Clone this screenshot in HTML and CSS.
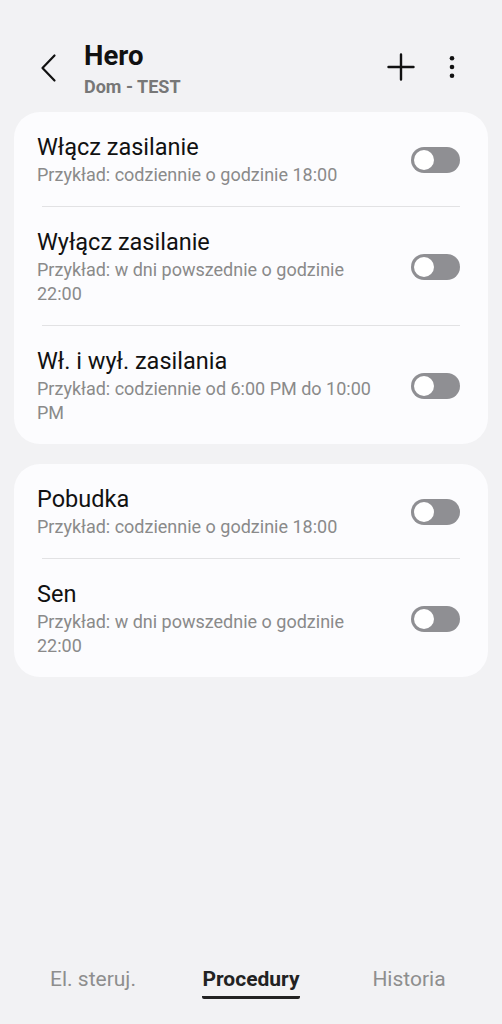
FILE: index.html
```html
<!DOCTYPE html>
<html lang="pl">
<head>
    <meta charset="UTF-8">
    <title>Hero - Procedury</title>
    <meta name="viewport" content="width=device-width, initial-scale=1.0">
    <link rel="stylesheet" href="styles.css">
</head>
<body>
    <div class="app">
        <header class="topbar">
            <button class="icon-btn back" aria-label="Wstecz">
                <svg width="24" height="30" viewBox="0 0 24 30"><path d="M17.5 2.5 L5.5 15 L17.5 27.5" fill="none" stroke="#111" stroke-width="2.2" stroke-linecap="round" stroke-linejoin="round"/></svg>
            </button>
            <div class="titles">
                <h1>Hero</h1>
                <p class="subtitle">Dom - TEST</p>
            </div>
            <div class="actions">
                <button class="icon-btn" aria-label="Dodaj">
                    <svg width="28" height="28" viewBox="0 0 28 28"><path d="M14 1.5 V26.5 M1.5 14 H26.5" stroke="#111" stroke-width="2.4" stroke-linecap="round"/></svg>
                </button>
                <button class="icon-btn" aria-label="Więcej">
                    <svg width="8" height="24" viewBox="0 0 8 24"><circle cx="4" cy="3.3" r="2.3" fill="#111"/><circle cx="4" cy="12" r="2.3" fill="#111"/><circle cx="4" cy="20.7" r="2.3" fill="#111"/></svg>
                </button>
            </div>
        </header>

        <main class="content">
            <section class="card">
                <div class="row">
                    <div class="text">
                        <div class="name">Włącz zasilanie</div>
                        <div class="hint">Przykład: codziennie o godzinie 18:00</div>
                    </div>
                    <span class="switch"></span>
                </div>
                <div class="divider"></div>
                <div class="row">
                    <div class="text">
                        <div class="name">Wyłącz zasilanie</div>
                        <div class="hint">Przykład: w dni powszednie o godzinie 22:00</div>
                    </div>
                    <span class="switch"></span>
                </div>
                <div class="divider"></div>
                <div class="row">
                    <div class="text">
                        <div class="name">Wł. i wył. zasilania</div>
                        <div class="hint">Przykład: codziennie od 6:00 PM do 10:00 PM</div>
                    </div>
                    <span class="switch"></span>
                </div>
            </section>

            <section class="card">
                <div class="row">
                    <div class="text">
                        <div class="name">Pobudka</div>
                        <div class="hint">Przykład: codziennie o godzinie 18:00</div>
                    </div>
                    <span class="switch"></span>
                </div>
                <div class="divider"></div>
                <div class="row">
                    <div class="text">
                        <div class="name">Sen</div>
                        <div class="hint">Przykład: w dni powszednie o godzinie 22:00</div>
                    </div>
                    <span class="switch"></span>
                </div>
            </section>
        </main>

        <nav class="tabs">
            <a class="tab">El. steruj.</a>
            <a class="tab active">Procedury</a>
            <a class="tab">Historia</a>
        </nav>
    </div>
</body>
</html>
```

FILE: styles.css
```css
body {
    margin: 0;
    padding: 0;
    background-color: #f2f2f4;
    font-family: Roboto, 'Noto Sans', sans-serif;
    color: #111;
}

.app {
    display: flex;
    flex-direction: column;
    min-height: 100vh;
}

.topbar {
    display: flex;
    align-items: flex-start;
    padding: 41px 46px 0 37px;
    height: 71px;
}

.icon-btn {
    background: none;
    border: none;
    padding: 0;
    display: flex;
    align-items: center;
    justify-content: center;
    cursor: pointer;
}

.back {
    margin-top: 12px;
    margin-right: 23px;
}

.titles {
    flex: 1;
}

h1 {
    margin: 0;
    font-size: 27.5px;
    font-weight: 700;
    line-height: 30px;
    color: #111;
}

.subtitle {
    margin: 5px 0 0;
    font-size: 18px;
    font-weight: 700;
    line-height: 22px;
    color: #777;
}

.actions {
    display: flex;
    align-items: center;
    gap: 33px;
    margin-top: 12px;
}

.content {
    padding: 0 14px;
    display: flex;
    flex-direction: column;
    gap: 20px;
}

.card {
    background-color: #fcfcfe;
    border-radius: 26px;
}

.row {
    display: flex;
    align-items: center;
    gap: 28px;
    padding: 21px 28px 19px 23px;
}

.text {
    flex: 1;
}

.name {
    font-size: 23.5px;
    line-height: 28px;
    color: #111;
    margin-bottom: 2px;
}

.hint {
    font-size: 18px;
    line-height: 24px;
    color: #8a8a8a;
}

.divider {
    height: 1px;
    margin: 0 28px;
    background-color: #e2e2e4;
}

.switch {
    flex-shrink: 0;
    width: 49px;
    height: 26px;
    border-radius: 13px;
    background-color: #8f8f93;
    position: relative;
}

.switch::before {
    content: '';
    position: absolute;
    left: 3px;
    top: 3px;
    width: 20px;
    height: 20px;
    border-radius: 50%;
    background-color: #fff;
}

.tabs {
    margin-top: auto;
    display: grid;
    grid-template-columns: repeat(3, 1fr);
    padding: 0 14px 20px;
    height: 62px;
    box-sizing: border-box;
}

.tab {
    justify-self: center;
    font-size: 21px;
    line-height: 26px;
    color: #8e8e8e;
    height: 30px;
    padding-top: 4px;
}

.tab.active {
    font-weight: 700;
    color: #222;
    border-bottom: 3px solid #222;
    border-radius: 0 0 2px 2px;
}
```
